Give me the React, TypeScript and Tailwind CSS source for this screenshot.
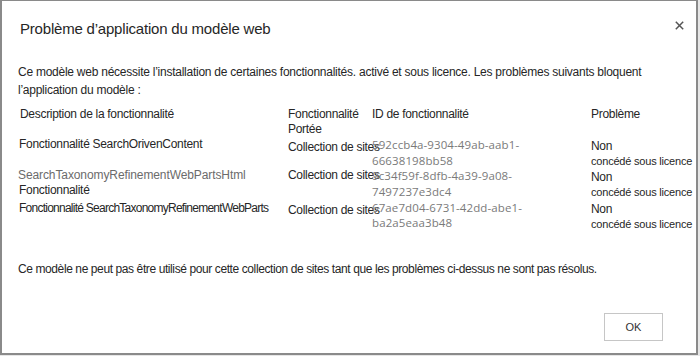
import React from "react";

const rows = [
  {
    desc: ["Fonctionnalité SearchOrivenContent"],
    descGray: false,
    id: ["592ccb4a-9304-49ab-aab1-", "66638198bb58"],
  },
  {
    desc: ["SearchTaxonomyRefinementWebPartsHtml", "Fonctionnalité"],
    descGray: true,
    id: ["9c34f59f-8dfb-4a39-9a08-", "7497237e3dc4"],
  },
  {
    desc: ["Fonctionnalité SearchTaxonomyRefinementWebParts"],
    descGray: false,
    id: ["67ae7d04-6731-42dd-abe1-", "ba2a5eaa3b48"],
  },
];

export default function App() {
  return (
    <div
      className="w-[700px] h-[356px] bg-[#e6e6e6] overflow-hidden"
      style={{ fontFamily: '"Liberation Sans", Arial, sans-serif' }}
    >
      <div className="w-[698px] h-[355px] bg-white border-l-2 border-t border-r-2 border-b-2 border-[#8a8a8a] flex flex-col text-[#262626]">
        <div className="flex items-start justify-between pl-[18px] pr-[12px] pt-[17px] h-[62px]">
          <div className="text-[15px] leading-[22px] font-light text-[#262626] tracking-[-0.2px]">
            Problème d’application du modèle web
          </div>
          <svg width="9" height="9" viewBox="0 0 9 9" className="mt-[3px]">
            <path d="M0.8 0.8 L8.2 8.2 M8.2 0.8 L0.8 8.2" stroke="#555" strokeWidth="1.5" />
          </svg>
        </div>
        <div className="pl-[16px] pr-[20px] text-[12px] leading-[18px] tracking-[-0.25px] whitespace-nowrap">
          Ce modèle web nécessite l’installation de certaines fonctionnalités. activé et sous licence. Les problèmes suivants bloquent
          <br />
          l’application du modèle :
        </div>
        <div className="mt-[8px] pl-[16px] text-[12px] leading-[15px] tracking-[-0.3px]">
          <div className="grid grid-cols-[270px_84px_219px_1fr] h-[30px] items-start">
            <div className="pl-[2px] whitespace-nowrap">Description de la fonctionnalité</div>
            <div className="whitespace-nowrap">
              Fonctionnalité
              <br />
              Portée
            </div>
            <div className="whitespace-nowrap">ID de fonctionnalité</div>
            <div>Problème</div>
          </div>
          {rows.map((r, i) => (
            <div
              key={i}
              className={`grid grid-cols-[270px_84px_219px_1fr] items-start ${i === 1 ? "h-[32px]" : "h-[31px]"}`}
            >
              <div className={`whitespace-nowrap ${i === 2 ? "mt-[1px] tracking-[-0.75px]" : ""}`}>
                {r.desc.map((d, j) => (
                  <div
                    key={j}
                    className={
                      r.descGray && j === 0 ? "text-[#6b6b6b] tracking-[-0.1px]" : "pl-[1px]"
                    }
                  >
                    {d}
                  </div>
                ))}
              </div>
              <div className={`whitespace-nowrap ${i === 1 ? "" : "mt-[3px]"}`}>Collection de sites</div>
              <div
                className={`text-[#7a7a7a] tracking-[0.1px] whitespace-nowrap ${i === 2 ? "leading-[15px]" : "leading-[16px]"}`}
                style={{ fontFamily: '"Open Sans", "Noto Sans", sans-serif' }}
              >
                <div className="text-[11.5px]">{r.id[0]}</div>
                <div className="text-[11.5px]">{r.id[1]}</div>
              </div>
              <div className="mt-[2px] whitespace-nowrap">
                <div>Non</div>
                <div className="text-[11px] tracking-[-0.2px]">concédé sous licence</div>
              </div>
            </div>
          ))}
        </div>
        <div className="mt-[29px] pl-[16px] text-[12px] leading-[18px] tracking-[-0.4px] whitespace-nowrap">
          Ce modèle ne peut pas être utilisé pour cette collection de sites tant que les problèmes ci-dessus ne sont pas résolus.
        </div>
        <div className="flex justify-end pr-[33px] mt-[35px]">
          <button className="w-[59px] h-[28px] border border-[#c6c6c6] bg-white text-[11px] text-[#333] flex items-center justify-center">
            OK
          </button>
        </div>
      </div>
    </div>
  );
}
